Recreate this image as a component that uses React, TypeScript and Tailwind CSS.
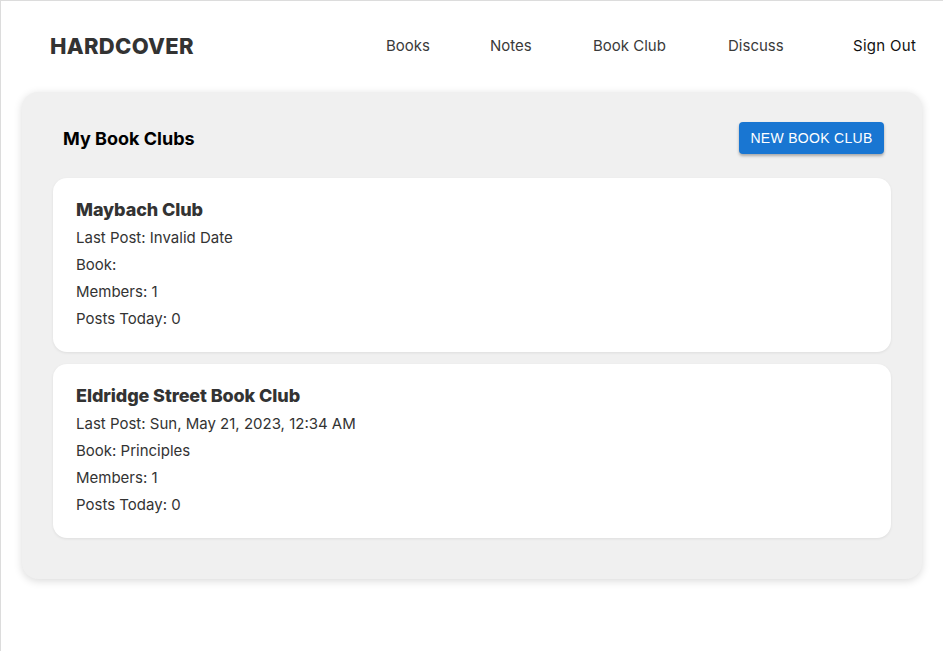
import React from 'react';

const clubs = [
  { name: 'Maybach Club', lastPost: 'Invalid Date', book: '', members: 1, postsToday: 0 },
  {
    name: 'Eldridge Street Book Club',
    lastPost: 'Sun, May 21, 2023, 12:34 AM',
    book: 'Principles',
    members: 1,
    postsToday: 0,
  },
];

const navLinks = [
  { label: 'Books', className: 'w-[104px]' },
  { label: 'Notes', className: 'w-[103px]' },
  { label: 'Book Club', className: 'w-[135px]' },
  { label: 'Discuss', className: 'w-[125px]' },
];

export default function App() {
  return (
    <div className="min-h-[651px] bg-white border-t border-l border-[#dcdcdc] text-[#333] font-['Inter','Liberation_Sans',sans-serif]">
      {/* Header */}
      <header className="h-[91px] flex items-center pl-[49px] pr-[26px]">
        <div className="text-[22px] font-extrabold tracking-[0.3px] text-[#333]">HARDCOVER</div>
        <nav className="ml-auto flex items-center text-[15px]">
          {navLinks.map((link) => (
            <a key={link.label} className={`${link.className} text-[#3a3a3a]`}>
              {link.label}
            </a>
          ))}
          <a className="w-[64px] text-[#111] tracking-[0.3px]">Sign Out</a>
        </nav>
      </header>

      {/* Book clubs panel */}
      <main className="mx-[21px] w-[900px] bg-[#f0f0f0] rounded-[16px] shadow-[0_2px_8px_rgba(0,0,0,0.15)] px-[31px] pt-[30px] pb-[41px]">
        <div className="flex items-center justify-between pl-[10px] pr-[7px] mb-[24px]">
          <h1 className="text-[18px] font-bold text-black">My Book Clubs</h1>
          <button className="h-[32px] w-[145px] bg-[#1976d2] text-white text-[14px] tracking-[0.3px] uppercase rounded-[4px] shadow-[0_2px_3px_rgba(0,0,0,0.3)] font-['Liberation_Sans',Arial,sans-serif]">
            New Book Club
          </button>
        </div>

        <div className="flex flex-col gap-[12px]">
          {clubs.map((club) => (
            <div
              key={club.name}
              className="bg-white rounded-[14px] shadow-[0_1px_3px_rgba(0,0,0,0.08)] px-[23px] pt-[20px] pb-[21px] h-[174px]"
            >
              <h2 className="text-[18px] font-extrabold tracking-[-0.1px] text-[#333] leading-[24px] mb-[2px]">
                {club.name}
              </h2>
              <div className="text-[15px] leading-[27px] text-[#333]">
                <p>Last Post: {club.lastPost}</p>
                <p>Book: {club.book}</p>
                <p>Members: {club.members}</p>
                <p>Posts Today: {club.postsToday}</p>
              </div>
            </div>
          ))}
        </div>
      </main>
    </div>
  );
}
